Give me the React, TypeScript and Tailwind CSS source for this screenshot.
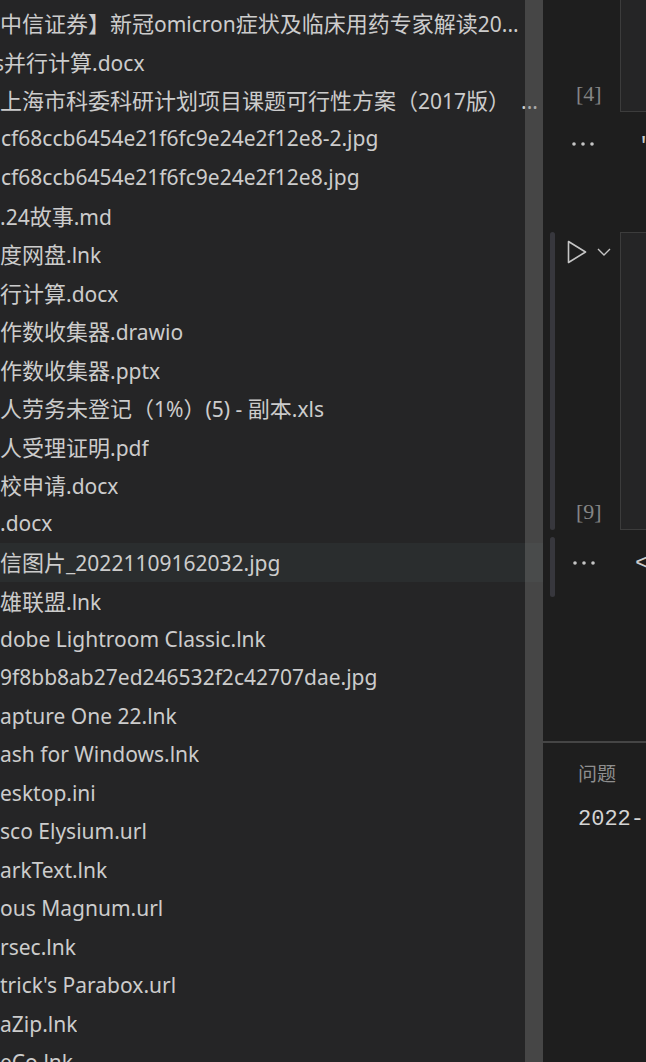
import React from 'react';

interface FileRow {
  name: string;
  shift?: string;
}

// visible part of each explorer entry (the panel is scrolled to the right)
const files: FileRow[] = [
  { name: '【中信证券】新冠omicron症状及临床用药专家解读20...', shift: 'ml-[-22px]' },
  { name: 's并行计算.docx', shift: 'ml-[-6px]' },
  { name: '上海市科委科研计划项目课题可行性方案（2017版）\u00a0\u00a0...' },
  { name: 'cf68ccb6454e21f6fc9e24e2f12e8-2.jpg', shift: 'ml-[1px]' },
  { name: 'cf68ccb6454e21f6fc9e24e2f12e8.jpg', shift: 'ml-[1px]' },
  { name: '.24故事.md' },
  { name: '度网盘.lnk' },
  { name: '行计算.docx' },
  { name: '作数收集器.drawio' },
  { name: '作数收集器.pptx' },
  { name: '人劳务未登记（1%）(5) - 副本.xls' },
  { name: '人受理证明.pdf' },
  { name: '校申请.docx' },
  { name: '.docx' },
  { name: '信图片_20221109162032.jpg' },
  { name: '雄联盟.lnk' },
  { name: 'dobe Lightroom Classic.lnk' },
  { name: '9f8bb8ab27ed246532f2c42707dae.jpg' },
  { name: 'apture One 22.lnk' },
  { name: 'ash for Windows.lnk' },
  { name: 'esktop.ini' },
  { name: 'sco Elysium.url' },
  { name: 'arkText.lnk' },
  { name: 'ous Magnum.url' },
  { name: 'rsec.lnk' },
  { name: "trick's Parabox.url" },
  { name: 'aZip.lnk' },
  { name: 'eCo.lnk' },
];

const HIGHLIGHT = 14;
const CJK = /[\u3000-\u303f\u4e00-\u9fff\uff00-\uffef]/;

// CJK runs keep the full em size, latin runs are a touch narrower (like Segoe UI)
function Name({ text }: { text: string }) {
  const parts = text.split(/([\u3000-\u303f\u4e00-\u9fff\uff00-\uffef]+)/).filter(Boolean);
  return (
    <>
      {parts.map((p, i) =>
        CJK.test(p) ? (
          <span key={i} className="text-[22px] font-['Noto_Sans_CJK_SC',sans-serif]">{p}</span>
        ) : (
          <span key={i} className="text-[21px] font-['Noto_Sans','Noto_Sans_CJK_SC',sans-serif]">{p}</span>
        )
      )}
    </>
  );
}

function Ellipsis() {
  return (
    <svg width="24" height="6" viewBox="0 0 24 6" fill="#c5c5c5">
      <circle cx="3" cy="3" r="1.8" />
      <circle cx="12" cy="3" r="1.8" />
      <circle cx="21" cy="3" r="1.8" />
    </svg>
  );
}

function Explorer() {
  return (
    <div className="relative w-[543px] h-full shrink-0 bg-[#252526] overflow-hidden">
      <div className="pt-[4px]">
        {files.map((f, i) => (
          <div
            key={i}
            className={`h-[38.5px] flex items-center overflow-hidden ${i === HIGHLIGHT ? 'bg-[#2a2d2e]' : ''}`}
          >
            <span className={`block whitespace-nowrap overflow-hidden text-[#cccccc] ${f.shift ?? ''}`}>
              <Name text={f.name} />
            </span>
          </div>
        ))}
      </div>
      {/* vertical scrollbar */}
      <div className="absolute top-0 bottom-0 right-0 w-[18px] bg-[rgba(121,121,121,0.4)]" />
    </div>
  );
}

function Notebook() {
  const count = "text-[22px] text-[#858585] leading-none font-['Liberation_Serif',serif]";
  return (
    <div className="flex-1 bg-[#1e1e1e] flex flex-col min-w-0">
      <div className="h-[741px] flex flex-col">
        {/* cell [4] */}
        <div className="h-[112px] flex">
          <div className="w-[77px] shrink-0 flex items-end pb-[7px] pl-[33px]">
            <span className={count}>[4]</span>
          </div>
          <div className="flex-1 bg-[#252526] border-l border-b border-[#3c3c3c]" />
        </div>
        {/* output of [4] */}
        <div className="h-[120px] flex">
          <div className="w-[77px] shrink-0 pl-[28px] pt-[29px]">
            <Ellipsis />
          </div>
          <div className="flex-1 pt-[24px] pl-[17px] text-[22px] leading-none text-[#cccccc] font-['Liberation_Mono',monospace]">
            '
          </div>
        </div>
        {/* cell [9] */}
        <div className="h-[298px] flex">
          <div className="w-[77px] shrink-0 flex">
            <div className="ml-[7px] w-[5px] rounded-full bg-[#37373d]" />
            <div className="flex-1 flex flex-col justify-between pt-[8px] pb-[7px]">
              <div className="flex items-center gap-[10px] pl-[12px]">
                <svg width="20" height="24" viewBox="0 0 20 24" fill="none" stroke="#c5c5c5" strokeWidth="1.6" strokeLinejoin="round">
                  <path d="M1.5 1.5 L18.5 12 L1.5 22.5 Z" />
                </svg>
                <svg width="14" height="8" viewBox="0 0 14 8" fill="none" stroke="#c5c5c5" strokeWidth="1.4">
                  <path d="M1 1 L7 7 L13 1" />
                </svg>
              </div>
              <span className={`${count} pl-[21px]`}>[9]</span>
            </div>
          </div>
          <div className="flex-1 bg-[#252526] border-l border-t border-b border-[#3c3c3c]" />
        </div>
        {/* output of [9] */}
        <div className="h-[67px] flex pt-[7px]">
          <div className="w-[77px] shrink-0 flex">
            <div className="ml-[7px] w-[5px] rounded-full bg-[#37373d]" />
            <div className="pl-[17px] pt-[23px]">
              <Ellipsis />
            </div>
          </div>
          <div className="flex-1 pt-[15px] pl-[15px] text-[24px] leading-none text-[#cccccc] font-['Liberation_Mono',monospace]">
            &lt;
          </div>
        </div>
      </div>
      {/* bottom panel */}
      <div className="flex-1 border-t-2 border-[#454545] pl-[35px] pt-[20px]">
        <div className="text-[19px] leading-none text-[#8f8f8f] font-['Noto_Sans_CJK_SC',sans-serif]">问题</div>
        <div className="mt-[27px] text-[22px] leading-none text-[#d4d4d4] whitespace-nowrap font-['Liberation_Mono',monospace]">
          2022-
        </div>
      </div>
    </div>
  );
}

export default function App() {
  return (
    <div className="w-[646px] h-[1062px] flex overflow-hidden">
      <Explorer />
      <Notebook />
    </div>
  );
}
